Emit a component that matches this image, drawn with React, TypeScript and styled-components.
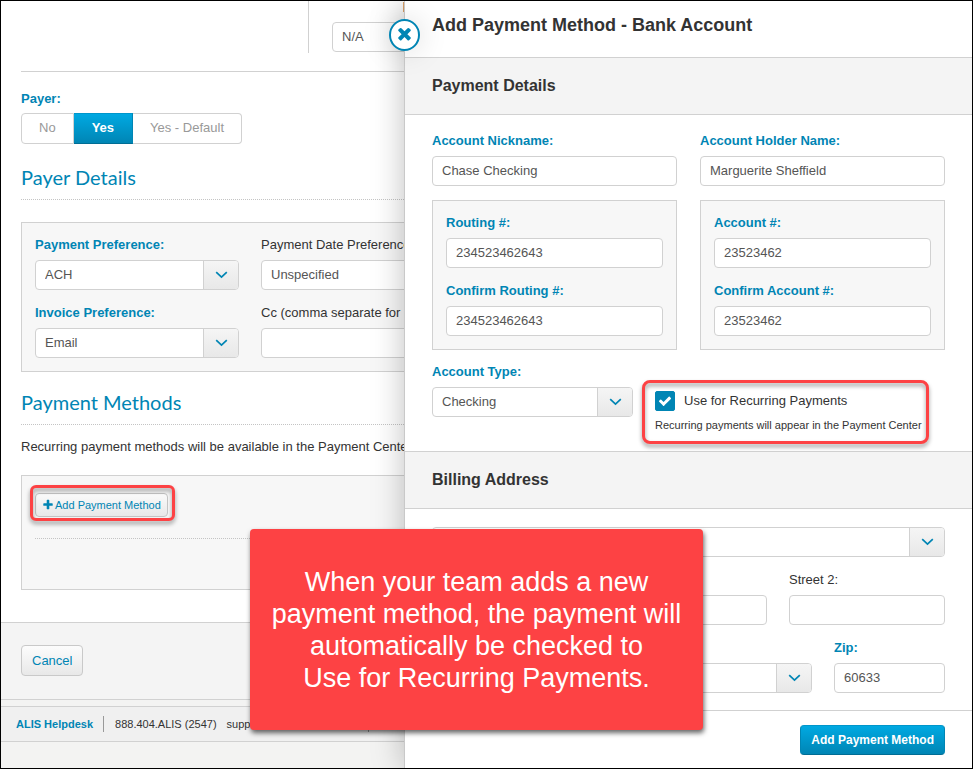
import React, { useId } from "react";
import styled, { createGlobalStyle, css } from "styled-components";

const GlobalStyle = createGlobalStyle`
  *, *::before, *::after { box-sizing: border-box; }
  body { margin: 0; }
  body, button, input, select {
    font-family: "Liberation Sans", Arial, sans-serif;
    font-size: 13px;
    line-height: 20px;
    color: #333;
  }
`;

const color = {
  blue: "#0085b4",
  line: "#d1d1d1",
  panel: "#f7f7f7",
  bar: "#f4f4f4",
  alert: "#fd4244",
};

const Frame = styled.div`
  position: relative;
  min-height: 100vh;
  overflow: hidden;
  border: 1px solid #000;
  background: #fff;
`;

/* Resident page behind the drawer */

const Page = styled.div`
  display: flex;
  flex-direction: column;
  min-height: calc(100vh - 2px);
  background: #f3f3f2;
`;

const PageBody = styled.main`
  padding: 0 20px 32px;
  background: #fff;
`;

const TopRow = styled.div`
  display: flex;
  justify-content: flex-start;
  height: 71px;
  border-bottom: 1px solid ${color.line};
`;

const TopColumn = styled.div`
  width: 288px;
  height: 52px;
  border-right: 1px solid ${color.line};
`;

const TopField = styled.div`
  position: relative;
  width: 240px;
  margin: 21px 0 0 23px;
  /* orange flag above the field */
  &::before {
    content: "";
    position: absolute;
    left: 71px;
    top: -20px;
    width: 8px;
    height: 10px;
    background: #e3a66b;
  }
`;

const PayerField = styled.fieldset`
  margin: 17px 0 0;
  padding: 0 0 3px;
  border: 0;
`;

const labelText = css<{ $plain?: boolean }>`
  display: block;
  padding: 0;
  font-weight: ${(p) => (p.$plain ? 400 : 700)};
  color: ${(p) => (p.$plain ? "#333" : color.blue)};
  white-space: nowrap;
`;

const Label = styled.label<{ $plain?: boolean }>`
  ${labelText}
`;

const Legend = styled.legend`
  ${labelText}
`;

const Segments = styled.div`
  display: inline-flex;
  margin-top: 4px;
  height: 31px;
`;

const Segment = styled.button<{ $active?: boolean }>`
  padding: 0 17px 2px;
  border: 1px solid ${color.line};
  border-left-width: 0;
  background: #fff;
  color: #999;
  cursor: pointer;
  &:first-child {
    border-left-width: 1px;
    border-radius: 4px 0 0 4px;
  }
  &:last-child { border-radius: 0 4px 4px 0; }
  ${(p) =>
    p.$active &&
    css`
      padding: 0 18px 2px;
      border-color: #0096cb #0085b4 #006d94;
      border-right-width: 1px;
      background: linear-gradient(#00a9e2, #0085b4);
      color: #fff;
      font-weight: 700;
    `}
`;

const Heading = styled.h2`
  margin: 16px 0 22px;
  padding-bottom: 8px;
  border-bottom: 1px dotted #c4c4c4;
  font-family: Lato, sans-serif;
  font-size: 20px;
  line-height: 28px;
  font-weight: 400;
  color: ${color.blue};
`;

const Note = styled.p`
  margin: -10px 0 18px;
`;

const Panel = styled.section<{ $tall?: boolean }>`
  padding: ${(p) => (p.$tall ? "17px 13px 50px" : "12px 13px 13px")};
  border: 1px solid ${color.line};
  background: ${color.panel};
`;

const PreferenceGrid = styled.div`
  display: grid;
  grid-template-columns: 204px 240px;
  gap: 13px 22px;
`;

const Stack = styled.div`
  display: grid;
  gap: 13px;
`;

const FieldBox = styled.div`
  display: flex;
  flex-direction: column;
  justify-content: flex-end;
  gap: 5px;
  min-width: 0;
`;

const Input = styled.input`
  width: 100%;
  min-width: 0;
  height: 30px;
  padding: 0 9px 2px;
  border: 1px solid ${color.line};
  border-radius: 4px;
  background: #fff;
  color: #555;
`;

const SelectBox = styled.div`
  display: flex;
  height: 30px;
  border: 1px solid ${color.line};
  border-radius: 4px;
  background: #fff;
  overflow: hidden;
`;

const NativeSelect = styled.select`
  flex: 1;
  min-width: 0;
  padding: 0 9px;
  border: 0;
  background: transparent;
  color: #555;
  appearance: none;
`;

const Arrow = styled.span`
  display: flex;
  align-items: center;
  justify-content: center;
  width: 35px;
  border-left: 1px solid ${color.line};
  background: linear-gradient(#f5f5f5, #e8e8e8);
`;

const highlight = css`
  content: "";
  position: absolute;
  border: 3px solid ${color.alert};
  filter: drop-shadow(0 3px 2px rgba(0, 0, 0, 0.4));
  pointer-events: none;
`;

const MarkedButton = styled.div`
  position: relative;
  width: fit-content;
  &::after {
    ${highlight}
    inset: -8px -7px -4px -5px;
    border-radius: 6px;
  }
`;

const SmallButton = styled.button`
  display: flex;
  align-items: center;
  gap: 1px;
  height: 24px;
  padding: 0 6px 1px;
  border: 1px solid #c4c4c4;
  border-radius: 4px;
  background: linear-gradient(#fafafa, #e8e8e8);
  color: ${color.blue};
  font-size: 11px;
  cursor: pointer;
`;

const Divider = styled.hr`
  margin: 21px 0 0;
  border: 0;
  border-top: 1px dotted #c4c4c4;
`;

const ActionBar = styled.div`
  padding: 22px 20px 23px;
  border: solid ${color.line};
  border-width: 1px 0;
  background: ${color.bar};
`;

const CancelButton = styled.button`
  display: block;
  height: 31px;
  padding: 0 10px;
  border: 1px solid #c9c9c9;
  border-radius: 4px;
  background: linear-gradient(#fcfcfc, #e8e8e8);
  color: ${color.blue};
  cursor: pointer;
`;

const HelpBar = styled.footer`
  display: flex;
  align-items: center;
  height: 36px;
  margin-top: 6px;
  padding-left: 15px;
  border: solid ${color.line};
  border-width: 1px 0;
  background: #f0f0f0;
  font-size: 11px;
  white-space: nowrap;
`;

const HelpLink = styled.a`
  padding-right: 10px;
  color: ${color.blue};
  font-weight: 700;
  text-decoration: none;
`;

const HelpItem = styled.span<{ $ruled?: boolean }>`
  min-height: 16px;
  padding: 0 10px 0 ${(p) => (p.$ruled ? "11px" : "0")};
  line-height: 16px;
  border-left: ${(p) => (p.$ruled ? "1px solid #999" : "0")};
`;

/* Drawer */

const Drawer = styled.aside`
  position: absolute;
  top: 0;
  right: 0;
  bottom: 0;
  width: 568px;
  border-left: 1px solid #c9c9c9;
  background: #fff;
  box-shadow: 0 0 30px rgba(0, 0, 0, 0.25);
`;

const CloseButton = styled.button`
  position: absolute;
  top: 18px;
  left: -16px;
  display: flex;
  align-items: center;
  justify-content: center;
  width: 31px;
  height: 32px;
  padding: 0 0 4px;
  border: 2px solid ${color.blue};
  border-radius: 50%;
  background: #fff;
  box-shadow: 0 0 30px rgba(0, 0, 0, 0.15);
  cursor: pointer;
`;

const DrawerTitle = styled.h1`
  margin: 0;
  padding: 12px 27px 20px;
  font-size: 18px;
  line-height: 24px;
`;

const SectionTitle = styled.h2`
  margin: 0;
  padding: 15px 27px 16px;
  border: solid ${color.line};
  border-width: 1px 0;
  background: ${color.bar};
  font-size: 16px;
  line-height: 25px;
`;

const DetailsGrid = styled.div`
  display: grid;
  grid-template-columns: 1fr 1fr;
  gap: 14px 23px;
  padding: 16px 27px 0;
`;

const TypeRow = styled.div`
  display: grid;
  grid-template-columns: 201px auto;
  justify-content: start;
  gap: 22px;
  padding: 12px 27px 34px;
`;

const Recurring = styled.div`
  position: relative;
  align-self: end;
  padding-right: 4px;
  margin-bottom: -16px;
  &::after {
    ${highlight}
    inset: -11px -3px -11px -13px;
    border-radius: 8px;
  }
`;

const CheckLabel = styled.label`
  display: flex;
  align-items: center;
  gap: 9px;
`;

const CheckBox = styled.span`
  display: grid;
  width: 20px;
  height: 20px;
  place-items: center;
  > * { grid-area: 1 / 1; }
  svg { z-index: 1; pointer-events: none; }
`;

const CheckInput = styled.input`
  width: 20px;
  height: 20px;
  margin: 0;
  border: 1px solid ${color.blue};
  border-radius: 2px;
  appearance: none;
  &:checked { background: ${color.blue}; }
`;

const Hint = styled.p`
  margin: 6px 0 0;
  font-size: 11px;
  line-height: 16px;
  white-space: nowrap;
`;

const AddressForm = styled.div`
  display: grid;
  gap: 13px;
  padding: 18px 27px 17px;
`;

const AddressRow = styled.div<{ $columns: string }>`
  display: grid;
  grid-template-columns: ${(p) => p.$columns};
  gap: 22px;
`;

const DrawerFooter = styled.div`
  display: flex;
  justify-content: flex-end;
  padding: 14px 27px 13px;
  border-top: 1px solid ${color.line};
`;

const PrimaryButton = styled.button`
  height: 30px;
  padding: 0 10px 1px;
  border: 1px solid;
  border-color: #0096cb #0085b4 #006d94;
  border-radius: 4px;
  background: linear-gradient(#00a9e2, #0085b4);
  color: #fff;
  font-size: 12px;
  font-weight: 700;
  cursor: pointer;
`;

const Callout = styled.div`
  position: absolute;
  left: 249px;
  top: 528px;
  width: 453px;
  padding: 37px 12px 36px;
  border-radius: 4px;
  background: ${color.alert};
  box-shadow: 1px 3px 5px rgba(0, 0, 0, 0.6);
  color: #fff;
  font-size: 27px;
  line-height: 32px;
  text-align: center;
`;

const glyphs = {
  times:
    "M1490 1322q0 40-28 68l-136 136q-28 28-68 28t-68-28l-294-294-294 294q-28 28-68 28t-68-28l-136-136q-28-28-28-68t28-68l294-294-294-294q-28-28-28-68t28-68l136-136q28-28 68-28t68 28l294 294 294-294q28-28 68-28t68 28l136 136q28 28 28 68t-28 68l-294 294 294 294q28 28 28 68z",
  check:
    "M1671 566q0 40-28 68l-724 724-136 136q-28 28-68 28t-68-28l-136-136-362-362q-28-28-28-68t28-68l136-136q28-28 68-28t68 28l294 295 656-657q28-28 68-28t68 28l136 136q28 28 28 68z",
  plus:
    "M1600 736v192q0 40-28 68t-68 28h-416v416q0 40-28 68t-68 28h-192q-40 0-68-28t-28-68v-416h-416q-40 0-68-28t-28-68v-192q0-40 28-68t68-28h416v-416q0-40 28-68t68-28h192q40 0 68 28t28 68v416h416q40 0 68 28t28 68z",
};

function Glyph({ name, size, fill }: { name: keyof typeof glyphs; size: number; fill: string }) {
  return (
    <svg width={size} height={size} viewBox="0 0 1792 1792" fill={fill} aria-hidden="true">
      <path d={glyphs[name]} />
    </svg>
  );
}

function Chevron() {
  return (
    <Arrow aria-hidden="true">
      <svg width="13" height="8" viewBox="0 0 13 8" fill="none" stroke={color.blue} strokeWidth="1.7">
        <path d="M1.2 1.2 6.5 6.2 11.8 1.2" />
      </svg>
    </Arrow>
  );
}

type FieldProps = { label?: string; name?: string; value?: string; plain?: boolean };

function TextField({ label, name, value = "", plain }: FieldProps) {
  const id = useId();
  return (
    <FieldBox>
      {label && <Label htmlFor={id} $plain={plain}>{label}</Label>}
      <Input id={id} aria-label={name} defaultValue={value} />
    </FieldBox>
  );
}

function SelectField({ label, name, value = "", plain }: FieldProps) {
  const id = useId();
  return (
    <FieldBox>
      {label && <Label htmlFor={id} $plain={plain}>{label}</Label>}
      <SelectBox>
        <NativeSelect id={id} aria-label={name} defaultValue={value}>
          <option>{value}</option>
        </NativeSelect>
        <Chevron />
      </SelectBox>
    </FieldBox>
  );
}

export default function App() {
  return (
    <Frame>
      <GlobalStyle />
      <Page>
        <PageBody>
          <TopRow>
            <TopColumn />
            <TopField>
              <Input aria-label="Status" defaultValue="N/A" />
            </TopField>
          </TopRow>
          <PayerField>
            <Legend>Payer:</Legend>
            <Segments>
              <Segment type="button">No</Segment>
              <Segment type="button" $active aria-pressed="true">Yes</Segment>
              <Segment type="button">Yes - Default</Segment>
            </Segments>
          </PayerField>
          <Heading>Payer Details</Heading>
          <Panel>
            <PreferenceGrid>
              <SelectField label="Payment Preference:" value="ACH" />
              <SelectField label="Payment Date Preference:" value="Unspecified" plain />
              <SelectField label="Invoice Preference:" value="Email" />
              <TextField label="Cc (comma separate for multiple):" plain />
            </PreferenceGrid>
          </Panel>
          <Heading>Payment Methods</Heading>
          <Note>Recurring payment methods will be available in the Payment Center</Note>
          <Panel $tall>
            <MarkedButton>
              <SmallButton type="button">
                <Glyph name="plus" size={12} fill={color.blue} />
                Add Payment Method
              </SmallButton>
            </MarkedButton>
            <Divider />
          </Panel>
        </PageBody>
        <ActionBar>
          <CancelButton type="button">Cancel</CancelButton>
        </ActionBar>
        <HelpBar>
          <HelpLink href="#helpdesk">ALIS Helpdesk</HelpLink>
          <HelpItem $ruled>888.404.ALIS (2547)</HelpItem>
          <HelpItem>support@medtelligent.com</HelpItem>
          <HelpItem $ruled />
        </HelpBar>
      </Page>

      <Drawer aria-label="Add Payment Method">
        <CloseButton type="button" aria-label="Close">
          <Glyph name="times" size={19} fill={color.blue} />
        </CloseButton>
        <DrawerTitle>Add Payment Method - Bank Account</DrawerTitle>
        <SectionTitle>Payment Details</SectionTitle>
        <DetailsGrid>
          <TextField label="Account Nickname:" value="Chase Checking" />
          <TextField label="Account Holder Name:" value="Marguerite Sheffield" />
          <Panel>
            <Stack>
              <TextField label="Routing #:" value="234523462643" />
              <TextField label="Confirm Routing #:" value="234523462643" />
            </Stack>
          </Panel>
          <Panel>
            <Stack>
              <TextField label="Account #:" value="23523462" />
              <TextField label="Confirm Account #:" value="23523462" />
            </Stack>
          </Panel>
        </DetailsGrid>
        <TypeRow>
          <SelectField label="Account Type:" value="Checking" />
          <Recurring>
            <CheckLabel>
              <CheckBox>
                <CheckInput type="checkbox" defaultChecked />
                <Glyph name="check" size={14} fill="#fff" />
              </CheckBox>
              Use for Recurring Payments
            </CheckLabel>
            <Hint>Recurring payments will appear in the Payment Center</Hint>
          </Recurring>
        </TypeRow>
        <SectionTitle>Billing Address</SectionTitle>
        <AddressForm>
          <SelectBox>
            <NativeSelect aria-label="Saved address" />
            <Chevron />
          </SelectBox>
          <AddressRow $columns="1fr 156px">
            <TextField name="Street 1" />
            <TextField label="Street 2:" plain />
          </AddressRow>
          <AddressRow $columns="1fr 1fr 111px">
            <TextField name="City" />
            <SelectField name="State" />
            <TextField label="Zip:" value="60633" />
          </AddressRow>
        </AddressForm>
        <DrawerFooter>
          <PrimaryButton type="button">Add Payment Method</PrimaryButton>
        </DrawerFooter>
      </Drawer>

      <Callout role="note">
        When your team adds a new payment method, the payment will automatically be checked to
        <br />
        Use for Recurring Payments.
      </Callout>
    </Frame>
  );
}
